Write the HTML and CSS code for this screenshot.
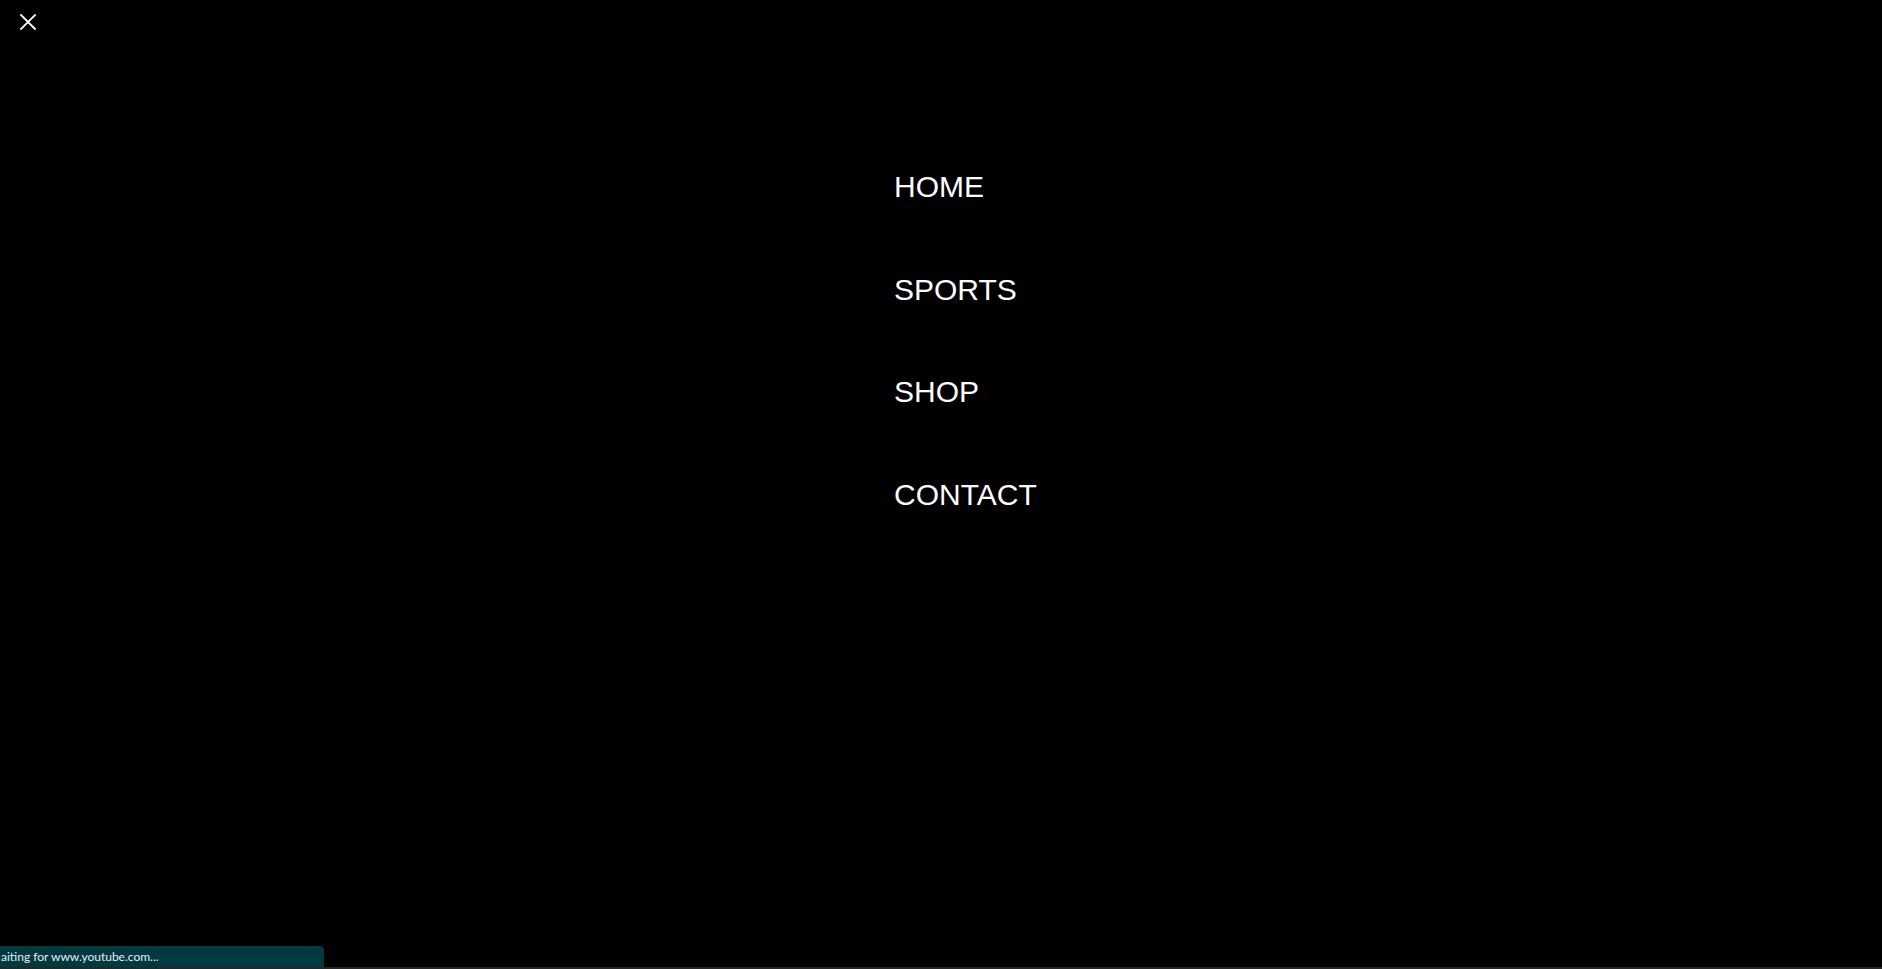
FILE: index.html
```html
<!DOCTYPE html>
<html lang="en">
<head>
<meta charset="utf-8">
<title>Menu</title>
<link rel="stylesheet" href="styles.css">
</head>
<body>
<div class="overlay">
  <button class="close" aria-label="Close menu">
    <svg width="16" height="16" viewBox="0 0 16 16"><path d="M1 1 L15 15 M15 1 L1 15" stroke="#fff" stroke-width="1.8" stroke-linecap="square" fill="none"/></svg>
  </button>
  <nav class="menu">
    <ul class="menu-list">
      <li><a href="#">HOME</a></li>
      <li><a href="#">SPORTS</a></li>
      <li><a href="#">SHOP</a></li>
      <li><a href="#">CONTACT</a></li>
    </ul>
  </nav>
</div>
<div class="status">aiting for www.youtube.com...</div>
<div class="bottom-edge"></div>
</body>
</html>
```

FILE: styles.css
```css
html, body {
  margin: 0;
  padding: 0;
  height: 100%;
  background: #000;
  overflow: hidden;
}
body {
  font-family: "Liberation Sans", Arial, sans-serif;
  color: #fff;
}
.overlay {
  height: 100%;
  display: flex;
  flex-direction: column;
}
.close {
  position: absolute;
  left: 20px;
  top: 14px;
  width: 16px;
  height: 16px;
  padding: 0;
  border: 0;
  background: none;
  cursor: pointer;
}
.close svg { display: block; }
.menu {
  padding-top: 170px;
  margin-left: calc(50% - 47px);
}
.menu-list {
  list-style: none;
  margin: 0;
  padding: 0;
  display: flex;
  flex-direction: column;
  gap: 68px;
}
.menu-list a {
  display: block;
  font-size: 30px;
  line-height: 1.15;
  color: #fff;
  text-decoration: none;
}
.status {
  position: fixed;
  left: 0;
  bottom: 2px;
  width: 324px;
  height: 21px;
  box-sizing: border-box;
  padding-left: 1px;
  background: #003a3e;
  border-top-right-radius: 4px;
  color: #e8eef0;
  font-family: Lato, "Open Sans", sans-serif;
  font-size: 12px;
  line-height: 21px;
  white-space: nowrap;
}
.bottom-edge {
  position: fixed;
  left: 0;
  right: 0;
  bottom: 0;
  height: 2px;
  background: #262626;
}
```
